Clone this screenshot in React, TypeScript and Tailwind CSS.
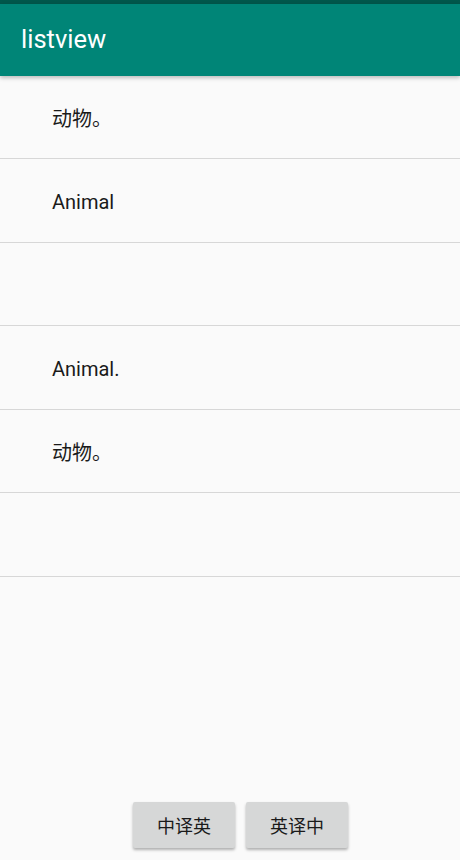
import React from 'react';

const rows: { text: string; cjk?: boolean; h: string }[] = [
  { text: '动物。', cjk: true, h: 'h-[83px]' },
  { text: 'Animal', h: 'h-[84px]' },
  { text: '', h: 'h-[83px]' },
  { text: 'Animal.', h: 'h-[84px]' },
  { text: '动物。', cjk: true, h: 'h-[83px]' },
  { text: '', h: 'h-[84px]' },
];

const App: React.FC = () => {
  return (
    <div className="w-[460px] h-[860px] bg-[#fafafa] flex flex-col overflow-hidden font-['Roboto','Noto_Sans_CJK_SC',sans-serif]">
      <div className="h-[4px] bg-[#00574b] shrink-0" />
      <div className="h-[72px] bg-[#008577] flex items-center px-[21px] shrink-0 shadow-[0_2px_4px_rgba(0,0,0,0.25)] relative z-10">
        <span className="text-white text-[25.5px] leading-none">listview</span>
      </div>

      <ul className="flex flex-col">
        {rows.map((r, i) => (
          <li
            key={i}
            className={`${r.h} border-b border-[#d7d7d7] flex items-center pl-[52px] pt-[2px] text-[20px] text-[#1a1a1a]`}
          >
            <span className={r.cjk ? "font-['Noto_Sans_CJK_SC',sans-serif]" : ''}>{r.text}</span>
          </li>
        ))}
      </ul>

      <div className="mt-auto flex gap-[11px] pl-[133px] pb-[12px]">
        <button className="w-[102px] h-[46px] bg-[#d6d7d7] rounded-[2px] shadow-[0_2px_3px_rgba(0,0,0,0.3)] text-[18px] text-[#1a1a1a] font-['Noto_Sans_CJK_SC',sans-serif]">
          中译英
        </button>
        <button className="w-[102px] h-[46px] bg-[#d6d7d7] rounded-[2px] shadow-[0_2px_3px_rgba(0,0,0,0.3)] text-[18px] text-[#1a1a1a] font-['Noto_Sans_CJK_SC',sans-serif]">
          英译中
        </button>
      </div>
    </div>
  );
};

export default App;
